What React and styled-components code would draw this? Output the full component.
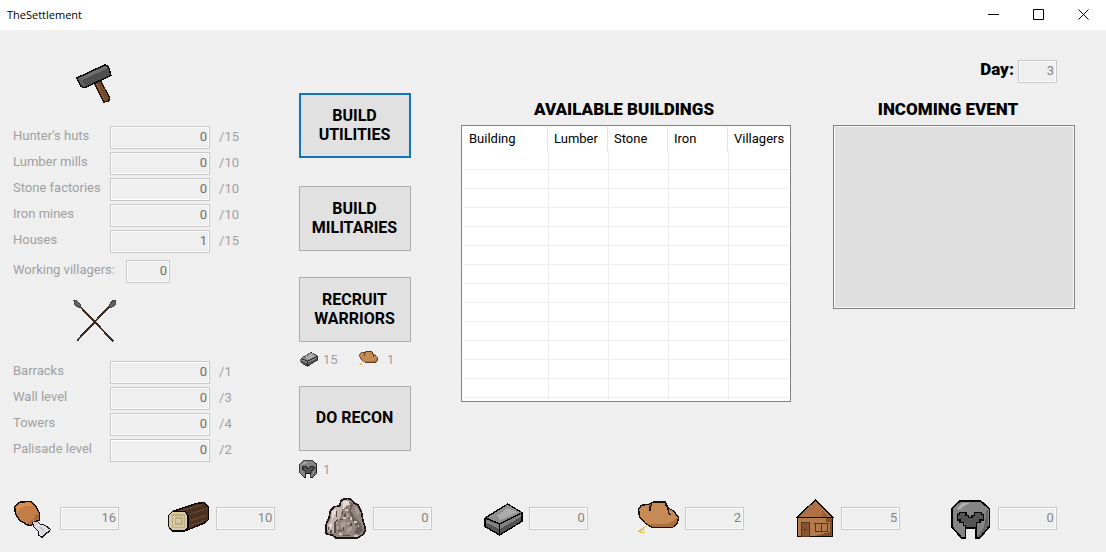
import React from "react";
import styled, { createGlobalStyle, css } from "styled-components";

const GlobalStyle = createGlobalStyle`
  * { box-sizing: border-box; }
  body { margin: 0; background: #efefef; }
  body, button, input, textarea { font-family: Roboto, "Liberation Sans", sans-serif; }
`;

const Window = styled.div`
  min-height: 100vh;
  display: flex;
  flex-direction: column;
  background: #efefef;
  color: #000;
  font-size: 13px;
`;

const TitleBar = styled.header`
  height: 30px;
  display: flex;
  align-items: center;
  padding-left: 7px;
  background: #fff;
`;

const AppName = styled.span`
  flex: 1;
  font-family: "Open Sans", "Noto Sans", sans-serif;
  font-size: 11px;
  line-height: 16px;
`;

const WindowButton = styled.button`
  width: 45px;
  height: 30px;
  padding: 0 0 2px;
  border: 0;
  background: transparent;
  display: flex;
  align-items: center;
  justify-content: center;
`;

const Glyph = styled.svg`
  width: 11px;
  height: 11px;
  fill: none;
  stroke: #000;
`;

const Main = styled.main`
  flex: 1;
  display: grid;
  grid-template-columns: 286px 162px 372fr 242fr;
  align-items: start;
  padding: 0 31px 0 13px;
`;

const StatsPanel = styled.section`
  display: flex;
  flex-direction: column;
  padding-top: 32px;
`;

const Sprite = styled.svg`
  flex: none;
  width: ${(p) => p.$size || 44}px;
  height: ${(p) => p.$size || 44}px;
  shape-rendering: crispEdges;
`;

const SectionIcon = styled.div`
  height: 44px;
  padding-left: 60px;
`;

const StatList = styled.div`
  display: flex;
  flex-direction: column;
  gap: 3px;
  padding: ${(p) => (p.$first ? "20px 0 7px" : "18px 0 0")};
`;

const StatRow = styled.div`
  display: flex;
  margin-bottom: ${(p) => (p.$last ? 16 : 0)}px;
`;

const StatLabel = styled.label`
  width: ${(p) => (p.$wide ? 113 : 97)}px;
  line-height: 19px;
  color: #a0a0a0;
`;

const Limit = styled.span`
  padding-left: 9px;
  line-height: 22px;
  color: #a0a0a0;
`;

const NumberBox = styled.input`
  width: ${(p) => p.$width}px;
  height: 23px;
  padding: 0 2px 2px;
  border: 1px solid #c9c9c9;
  border-radius: 0;
  outline: 0;
  box-shadow: inset 0 0 0 1px #fcfcfc;
  background: #efefef;
  color: ${(p) => (p.$soft ? "#858585" : "#6d6d6d")};
  font-size: 13px;
  text-align: right;
`;

const Actions = styled.section`
  display: flex;
  flex-direction: column;
  align-items: flex-start;
  padding-top: 63px;
`;

const ActionButton = styled.button`
  width: 112px;
  height: 65px;
  padding: 0 1px 2px 0;
  border: 1px solid #adadad;
  background: #e1e1e1;
  color: #000;
  font-size: 16px;
  font-weight: 700;
  line-height: 19px;
  margin-bottom: ${(p) => p.$after}px;
  ${(p) =>
    p.$active &&
    css`
      border: 2px solid #0f75bd;
    `}
`;

const Costs = styled.div`
  display: flex;
  height: 20px;
  margin-bottom: ${(p) => p.$after || 0}px;
`;

const Cost = styled.span`
  width: 60px;
  display: flex;
  align-items: center;
  gap: ${(p) => (p.$loose ? 8 : 4)}px;
  color: #a0a0a0;
`;

const TablePanel = styled.section`
  padding: 70px 42px 0 0;
`;

const Heading = styled.h2`
  margin: 0;
  padding: 0 ${(p) => p.$shift}px 6px 0;
  font-size: 17px;
  font-weight: 900;
  line-height: 19px;
  text-align: center;
`;

const TableFrame = styled.div`
  padding: 1px;
  border: 1px solid #828282;
  background: #fff;
`;

const Table = styled.table`
  width: 100%;
  table-layout: fixed;
  border-spacing: 0;
`;

const HeadCell = styled.th`
  width: ${(p) => (p.$main ? "auto" : "60px")};
  height: 24px;
  padding: 0 0 2px ${(p) => (p.$main ? 6 : 5)}px;
  border-right: 1px solid transparent;
  box-shadow: ${(p) => (p.$last ? "none" : "inset -1px 0 #e3e3e3")};
  font-weight: 400;
  text-align: left;
`;

const Cell = styled.td`
  height: ${(p) => (p.$stub ? 2 : 19)}px;
  padding: 0;
  border: 0 solid #ededed;
  border-bottom-width: ${(p) => (p.$stub ? 0 : 1)}px;
  border-right-width: 1px;
  &:last-child { border-right-width: 0; }
`;

const EventPanel = styled.section`
  display: flex;
  flex-direction: column;
  padding-top: 30px;
`;

const DayRow = styled.div`
  display: flex;
  justify-content: flex-end;
  gap: 4px;
  padding: 0 18px 17px 0;
`;

const DayLabel = styled.label`
  font-size: 17px;
  font-weight: 900;
  line-height: 19px;
`;

const EventLog = styled.textarea`
  width: 100%;
  height: 184px;
  border: 1px solid #828282;
  border-radius: 0;
  outline: 0;
  resize: none;
  background: #dfdfdf;
  box-shadow: inset 0 0 0 1px #f8f8f8;
`;

const Resources = styled.footer`
  display: grid;
  grid-template-columns: repeat(7, 1fr);
  padding: 18px 0 11px 12px;
`;

const Resource = styled.div`
  display: flex;
  align-items: center;
  gap: 4px;

  ${NumberBox} { margin-bottom: 1px; }
`;

const Hammer = () => (
  <Sprite viewBox="219 186 132 132" aria-hidden="true">
    <path d="M284 250 L301 242 L329 292 L326 304 L311 306 Z" fill="#754a2b" stroke="#1b120b" strokeWidth="4" />
    <path d="M291 252 L314 302" stroke="#8a5932" strokeWidth="4" />
    <path d="M230 234 L316 194 L325 199 L333 226 L252 264 L244 260 Z" fill="#4f4f4f" stroke="#080808" strokeWidth="4" />
    <path d="M234 236 L316 198 L323 205 L240 243 Z" fill="#6e6e6e" />
    <path d="M234 238 L242 235 L256 256 L250 260 Z" fill="#606060" />
  </Sprite>
);

const Spears = () => (
  <Sprite viewBox="219 447 132 132" aria-hidden="true">
    <path d="M234 463 L340 574 M334 463 L231 572" stroke="#3c2a20" strokeWidth="6" fill="none" />
    <path d="M222 452 L232 453 L243 465 L238 473 L225 466 Z M347 452 L337 453 L327 465 L331 473 L345 466 Z" fill="#636363" stroke="#444" strokeWidth="3" />
  </Sprite>
);

const Meat = () => (
  <Sprite viewBox="36 21 132 132" aria-hidden="true">
    <path d="M100 96 L112 94 L120 102 L136 106 L151 118 L149 124 L138 130 L126 142 L116 136 L114 122 L100 110 Z" fill="#dedee4" stroke="#16110e" strokeWidth="3" />
    <path d="M44 50 L60 36 L92 35 L106 46 L118 70 L118 90 L98 98 L94 107 L80 104 L58 90 L46 70 Z" fill="#c27e46" stroke="#120b07" strokeWidth="4" />
    <path d="M48 50 L62 38 L88 38 L100 50 L78 48 L60 56 L52 66 Z" fill="#d68e52" />
    <path d="M108 72 L116 74 L116 88 L98 94 L92 104 L80 100 L100 88 Z" fill="#a86c3c" />
    <path d="M98 98 L110 95 L114 104 L102 106 Z" fill="#d4d4dc" />
    <path d="M116 112 L130 116 L126 130" fill="none" stroke="#c3c3cc" strokeWidth="4" />
  </Sprite>
);

const Log = () => (
  <Sprite viewBox="504 21 132 132" aria-hidden="true">
    <path d="M522 63 L590 40 L612 38 L626 52 L626 88 L616 98 L552 124 L552 70 Z" fill="#49301f" stroke="#070504" strokeWidth="4" />
    <path d="M540 64 L606 44 M566 74 L620 56 M570 92 L618 76 M568 108 L612 92" stroke="#60422f" strokeWidth="4" fill="none" />
    <path d="M518 64 L554 64 L564 76 L564 112 L554 123 L518 123 L506 110 L506 76 Z" fill="#d9c9a0" stroke="#090704" strokeWidth="4" />
    <path d="M518 75 H554 V112 H518 Z M527 84 H546 V102 H527 Z" fill="none" stroke="#bfae85" strokeWidth="4" />
  </Sprite>
);

const Stone = () => (
  <Sprite viewBox="44 21 132 132" aria-hidden="true">
    <path d="M92 32 L102 26 L122 28 L132 40 L144 46 L154 68 L158 92 L166 120 L158 134 L140 144 L78 145 L68 136 L48 132 L46 106 L56 84 L60 62 L72 50 L88 48 Z" fill="#92857f" stroke="#1c1716" strokeWidth="5" />
    <path d="M94 34 L112 28 L108 52 L96 58 L90 80 L76 106 L70 130 L52 126 L50 106 L62 84 L62 64 L76 52 L90 52 Z" fill="#c2b5b0" />
    <path d="M98 34 L116 32 L118 44 L106 46 L98 60 Z M66 64 L78 56 L76 72 L68 82 L64 96 Z M56 104 L66 98 L62 118 Z" fill="#e9dcd8" />
    <path d="M122 36 L128 44 L122 62 L134 84 L150 98 L158 120 L146 134 L132 128 L140 110 L126 92 L116 66 Z" fill="#6c605c" />
    <path d="M132 50 L142 56 L146 74 L138 72 Z M90 100 L104 92 L108 106 L94 116 Z M112 112 L126 108 L126 120 L108 130 Z" fill="#ab9d98" />
    <path d="M78 64 V80 M84 86 L74 98 L74 130 M96 64 V74 M104 72 V84 M84 122 H96 M98 136 H120 M112 86 H120 M90 88 H98 M108 50 V58 M62 120 V128 M54 112 V120 M100 112 V124 M122 100 V108" stroke="#594d49" strokeWidth="4" fill="none" />
    <path d="M104 60 H112 M112 72 V80 M98 84 H106 M82 108 V116 M132 96 H140 M130 138 H142 M86 132 H94 M122 82 V90 M110 100 H118 M144 104 V112" stroke="#d4c7c2" strokeWidth="4" fill="none" />
  </Sprite>
);

const Ingot = ({ size }) => (
  <Sprite $size={size} viewBox="512 21 132 132" aria-hidden="true">
    <path d="M524 84 L592 42 L635 68 L635 94 L568 135 L524 110 Z" fill="#525252" stroke="#050505" strokeWidth="4" />
    <path d="M526 88 L568 104 L632 70 V80 L568 118 L526 98 Z" fill="#808080" />
    <path d="M528 84 L592 44 L632 68 L568 100 Z" fill="#8f8f8f" />
    <path d="M560 76 L592 54 L622 66 L570 90 Z" fill="#acacac" />
    <path d="M526 84 L568 102 L634 68 M568 102 V134" fill="none" stroke="#050505" strokeWidth="4" />
  </Sprite>
);

const Bread = ({ size }) => (
  <Sprite $size={size} viewBox="21 21 132 132" aria-hidden="true">
    <path d="M26 126 L50 108 M32 116 V130 M40 110 V124 M24 120 H36 M34 126 H46" stroke="#e4bf55" strokeWidth="3" fill="none" />
    <path d="M26 58 L34 46 L60 42 L72 36 L106 36 L114 54 L130 62 L145 82 L143 98 L128 112 L66 112 L46 100 L28 80 Z" fill="#c68a54" stroke="#190f08" strokeWidth="4" />
    <path d="M142 82 L142 98 L128 110 L68 110 L54 103 L112 102 L130 92 Z" fill="#a8713f" />
    <path d="M66 42 L60 50 V64 M106 42 L114 56 L116 70 L122 76" fill="none" stroke="#24150c" strokeWidth="4" />
  </Sprite>
);

const House = () => (
  <Sprite viewBox="39 21 132 132" aria-hidden="true">
    <path d="M53 82 H158 V139 H53 Z" fill="#b37a4c" stroke="#080503" strokeWidth="3" />
    <path d="M138 84 H156 V137 H110 L134 130 L150 126 V96 H138 Z" fill="#80502e" />
    <path d="M106 30 L158 82 H51 Z" fill="#ad7143" stroke="#080503" strokeWidth="4" />
    <path d="M120 54 L144 80 H124 L130 68 Z" fill="#95603a" />
    <path d="M64 97 H89 V138 H64 Z" fill="#875531" stroke="#593518" strokeWidth="3" />
    <path d="M72 118 H78" stroke="#1f1007" strokeWidth="3" />
    <path d="M102 100 H147 M106 100 V124 H143 V100 M124 100 V124" fill="none" stroke="#57341a" strokeWidth="3" />
  </Sprite>
);

const Helmet = ({ size }) => (
  <Sprite $size={size} viewBox="510 21 132 132" aria-hidden="true">
    <path d="M540 33 H602 L628 56 V110 L598 145 L588 144 V114 H556 V144 L546 145 L515 110 V56 Z" fill="#858585" stroke="#050505" strokeWidth="5" />
    <path d="M530 56 L548 38 H572 L552 48 L536 60 Z" fill="#b3b3b3" />
    <path d="M620 60 L625 60 V108 L600 140 H592 L612 112 Z" fill="#656565" />
    <path d="M532 70 H558 V76 H566 V82 H576 V76 H584 V70 H610 V90 H600 V98 H590 V114 H556 V98 H544 V90 H532 Z" fill="#535353" />
    <path d="M532 90 V74 H538 V68 H558 V76 H566 V82 H576 V76 H584 V68 H604 V74 H610 V90 H600 V98 H590 V114 H556 V106 H550 V98 H540 V90 Z" fill="none" stroke="#050505" strokeWidth="4" />
  </Sprite>
);

const utilities = [
  ["Hunter's huts", 0, 15],
  ["Lumber mills", 0, 10],
  ["Stone factories", 0, 10],
  ["Iron mines", 0, 10],
  ["Houses", 1, 15],
];

const militaries = [
  ["Barracks", 0, 1],
  ["Wall level", 0, 3],
  ["Towers", 0, 4],
  ["Palisade level", 0, 2],
];

const resources = [
  ["Food", 16, Meat],
  ["Lumber", 10, Log],
  ["Stone", 0, Stone],
  ["Iron", 0, Ingot],
  ["Bread", 2, Bread],
  ["Villagers", 5, House],
  ["Warriors", 0, Helmet],
];

const columns = ["Building", "Lumber", "Stone", "Iron", "Villagers"];

const Stats = ({ items, first }) => (
  <StatList $first={first}>
    {items.map(([name, value, max]) => {
      const id = name.toLowerCase().replace(/[^a-z]/g, "");
      return (
        <StatRow key={id}>
          <StatLabel htmlFor={id}>{name}</StatLabel>
          <NumberBox id={id} $width={100} value={value} readOnly />
          <Limit>/{max}</Limit>
        </StatRow>
      );
    })}
  </StatList>
);

export default function App() {
  return (
    <Window>
      <GlobalStyle />
      <TitleBar>
        <AppName>TheSettlement</AppName>
        <WindowButton aria-label="Minimize">
          <Glyph viewBox="0 0 11 11"><path d="M0 5.5H11" /></Glyph>
        </WindowButton>
        <WindowButton aria-label="Maximize">
          <Glyph viewBox="0 0 11 11"><path d="M.5 .5H10.5V10.5H.5Z" /></Glyph>
        </WindowButton>
        <WindowButton aria-label="Close">
          <Glyph viewBox="0 0 11 11"><path d="M.5 .5L10.5 10.5M10.5 .5L.5 10.5" /></Glyph>
        </WindowButton>
      </TitleBar>
      <Main>
        <StatsPanel>
          <SectionIcon><Hammer /></SectionIcon>
          <Stats items={utilities} first />
          <StatRow $last>
            <StatLabel htmlFor="working" $wide>Working villagers:</StatLabel>
            <NumberBox id="working" $width={44} value={0} readOnly />
          </StatRow>
          <SectionIcon><Spears /></SectionIcon>
          <Stats items={militaries} />
        </StatsPanel>
        <Actions>
          <ActionButton $active $after={28}>BUILD<br />UTILITIES</ActionButton>
          <ActionButton $after={26}>BUILD<br />MILITARIES</ActionButton>
          <ActionButton $after={7}>RECRUIT<br />WARRIORS</ActionButton>
          <Costs $after={17}>
            <Cost><Ingot size={20} />15</Cost>
            <Cost $loose><Bread size={20} />1</Cost>
          </Costs>
          <ActionButton $after={8}>DO RECON</ActionButton>
          <Costs>
            <Cost><Helmet size={20} />1</Cost>
          </Costs>
        </Actions>
        <TablePanel>
          <Heading $shift={4}>AVAILABLE BUILDINGS</Heading>
          <TableFrame>
            <Table>
              <thead>
                <tr>
                  {columns.map((name, i) => (
                    <HeadCell key={name} $main={i === 0} $last={i === 4}>{name}</HeadCell>
                  ))}
                </tr>
              </thead>
              <tbody>
                {Array.from({ length: 14 }, (_, row) => (
                  <tr key={row}>
                    {columns.map((name) => (
                      <Cell key={name} $stub={row === 13} />
                    ))}
                  </tr>
                ))}
              </tbody>
            </Table>
          </TableFrame>
        </TablePanel>
        <EventPanel>
          <DayRow>
            <DayLabel htmlFor="day">Day:</DayLabel>
            <NumberBox id="day" $width={39} $soft value={3} readOnly />
          </DayRow>
          <Heading $shift={12}>INCOMING EVENT</Heading>
          <EventLog aria-label="Incoming event" readOnly />
        </EventPanel>
      </Main>
      <Resources>
        {resources.map(([name, value, Icon]) => (
          <Resource key={name}>
            <Icon />
            <NumberBox $width={59} $soft value={value} aria-label={name} readOnly />
          </Resource>
        ))}
      </Resources>
    </Window>
  );
}
